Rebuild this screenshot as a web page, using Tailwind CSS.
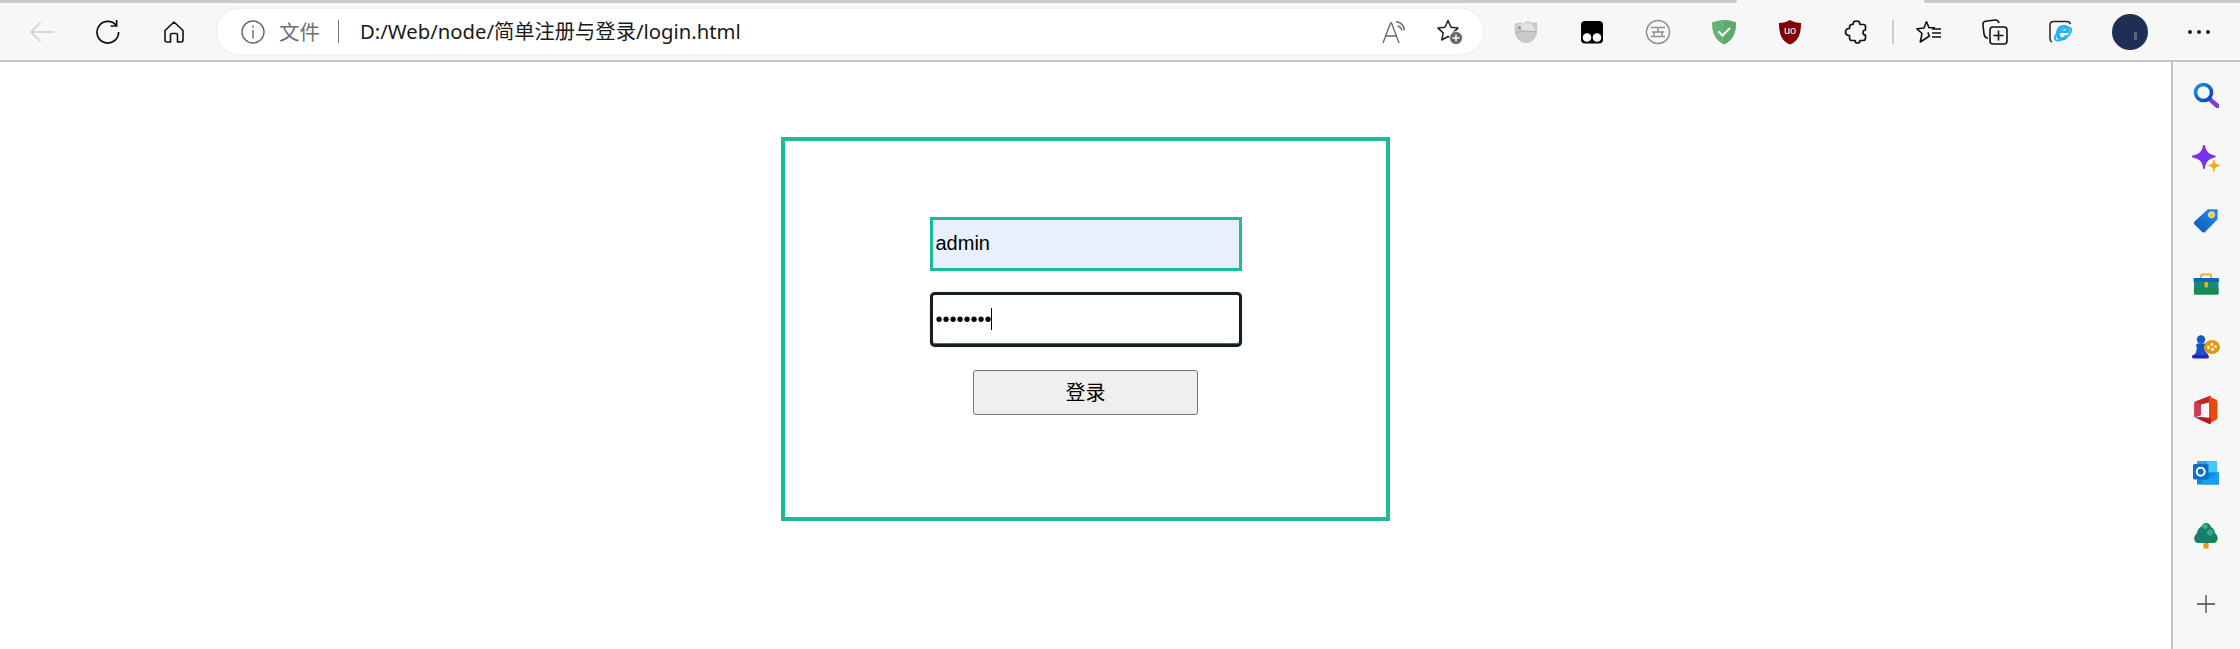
<!DOCTYPE html>
<html lang="zh">
<head>
<meta charset="utf-8">
<title>login</title>
<script src="https://cdn.jsdelivr.net/npm/@tailwindcss/browser@4"></script>
</head>
<body class="bg-white h-[649px] overflow-hidden font-['Liberation_Sans','Noto_Sans_CJK_SC',sans-serif]">
<header class="h-[62px] bg-[#f7f7f7] border-b-2 border-[#c4c4c4]">
  <div class="flex h-[3px]">
    <div class="w-[1737px] bg-[#c8c8c8] rounded-br-[4px]"></div>
    <div class="w-[187px]"></div>
    <div class="flex-1 bg-[#c8c8c8] rounded-bl-[4px]"></div>
  </div>
  <div class="flex items-center h-[57px] pl-[9px]">
    <div class="w-[66px] flex justify-center">
      <svg width="26" height="22" viewBox="0 0 26 22" fill="none" stroke="#cfcfcf" stroke-width="1.6"><path d="M25 11H2M11.5 1.5 2 11l9.5 9.5"/></svg>
    </div>
    <div class="w-[66px] flex justify-center">
      <svg width="26" height="26" viewBox="0 0 26 26" fill="none" stroke="#111" stroke-width="1.7"><path d="M21 6.2A10.8 10.8 0 1 0 23.6 13"/><path d="M21.6 1v6h-6"/></svg>
    </div>
    <div class="w-[66px] flex justify-center">
      <svg width="24" height="24" viewBox="0 0 24 24" fill="none" stroke="#111" stroke-width="1.6" stroke-linejoin="round"><path d="M12 2 3 10.5V20a2 2 0 0 0 2 2h3.5v-7a1.500 1.500 0 0 1 1.500-1.500h4a1.500 1.500 0 0 1 1.500 1.500v7H19a2 2 0 0 0 2-2v-9.500z"/></svg>
    </div>
    <div class="ml-[10px] w-[1266px] h-[45px] bg-white rounded-[22px] flex items-center pl-[24px] shadow-[0_0_3px_#e4e4e4]">
      <svg width="24" height="24" viewBox="0 0 24 24" fill="none" stroke="#666" stroke-width="1.4"><circle cx="12" cy="12" r="11"/><path d="M12 10v8.500M12 5.500v2.200"/></svg>
      <span class="ml-[14px] text-[20.5px] leading-none text-[#6f6f6f] font-['Noto_Sans_CJK_SC',sans-serif] w-[45px] whitespace-nowrap">文件</span>
      <span class="ml-[14px] w-[1px] h-[23px] bg-[#777]"></span>
      <span class="ml-[21px] text-[20.3px] text-[#1a1a1a] font-['Noto_Sans','Noto_Sans_CJK_SC',sans-serif] w-[1022px] whitespace-nowrap">D:/Web/node/简单注册与登录/login.html</span>
      <svg width="26" height="24" viewBox="0 0 26 24" fill="none" stroke="#666" stroke-width="1.3"><path d="M1 23 8.500 3h1L17 23M4 16h10.500"/><path d="M14 1.500c4.500.8 8 4 8.500 9M15.500 6c2.500.6 4 2.200 4.500 4.500"/></svg>
      <span class="ml-[28px] w-[28px] h-[26px]">
        <svg width="28" height="26" viewBox="0 0 28 26"><path d="M12 1.500l3 6.800 7 .8-5.200 4.800 1.400 7.100L12 17.500 5.800 21l1.400-7.100L2 9.100l7-.8z" fill="none" stroke="#222" stroke-width="1.500" stroke-linejoin="round"/><circle cx="20" cy="19" r="6.500" fill="#666" stroke="#fff" stroke-width="0.800"/><path d="M20 15.500v7M16.500 19h7" stroke="#fff" stroke-width="1.400"/></svg>
      </span>
    </div>
    <div class="ml-[10px] w-[66px] flex justify-center">
      <svg width="24" height="24" viewBox="0 0 24 24"><path d="M1 3c2 1 3 .5 5-1l3 2c3-3 7-3 9-1 2-.5 4-.5 5-1 .5 8 .5 12-2 16-2 3-5 5-9 5-4 0-7-2-9-5C0 14 .5 9 1 3z" fill="#c9c9c9"/><path d="M3 5.500 11 12 21 11c0-3-2-7-6-8-4 0-7 1-12 2.500z" fill="#e2e2e2"/><path d="M1 12.500 11 11l12 1" stroke="#aaa" fill="none"/><circle cx="5.500" cy="7.500" r="1.500" fill="#8f8f8f"/></svg>
    </div>
    <div class="w-[66px] flex justify-center">
      <svg width="24" height="24" viewBox="0 0 24 24"><rect x="1" y="1" width="22" height="22.500" rx="4" fill="#000"/><circle cx="7" cy="17.500" r="4.300" fill="#fff"/><circle cx="17" cy="17.500" r="4.300" fill="#fff"/></svg>
    </div>
    <div class="w-[66px] flex justify-center">
      <svg width="26" height="26" viewBox="0 0 26 26" fill="none" stroke="#8f8f8f" stroke-width="1.500"><circle cx="13" cy="13" r="11.500"/><path d="M6 8.500h14M6 17.500h14M7 13h12M13 8.500V13M9 13v4.500M17 13v4.500" stroke-width="1.400"/></svg>
    </div>
    <div class="w-[66px] flex justify-center">
      <svg width="24" height="26" viewBox="0 0 24 26"><path d="M12 1C8 1 4 2 0 3.500 0 12 2 21 12 25.500 22 21 24 12 24 3.500 20 2 16 1 12 1z" fill="#67b279"/><path d="M12 1v24.500C22 21 24 12 24 3.500 20 2 16 1 12 1z" fill="#5ea96f"/><path d="M6.500 12.500l4 4 7.500-7.500" fill="none" stroke="#fff" stroke-width="2"/></svg>
    </div>
    <div class="w-[66px] flex justify-center">
      <svg width="22" height="26" viewBox="0 0 22 26"><path d="M11 1C8 3 4 4 0 4c0 10 2 18 11 21.500C20 22 22 14 22 4c-4 0-8-1-11-3z" fill="#800000"/><text x="11" y="15" text-anchor="middle" font-family="Liberation Sans" font-size="11" fill="#fff">uo</text></svg>
    </div>
    <div class="w-[66px] flex justify-center">
      <svg width="24" height="24" viewBox="0 0 24 24" fill="none" stroke="#111" stroke-width="1.700" stroke-linejoin="round"><path d="M9 4.500C9 2.500 10.500 1 12.500 1S16 2.500 16 4.500h3.500c1.500 0 2 1 2 2V10c-1.500 0-2.500 1-2.500 2.500S20 15 21.500 15v3c0 1.500-1 2.500-2.500 2.500h-3c0 1.500-1 2.500-2.500 2.500S11 22 11 20.500H8c-1.500 0-2.500-1-2.500-2.500v-2.500C3.500 15.500 1.500 14.500 1.500 12S3.500 8.500 5.500 8.500V7C5.500 5.500 6.500 4.500 8 4.500z"/></svg>
    </div>
    <div class="ml-[3px] w-[2px] h-[24px] bg-[#cdcdcd]"></div>
    <div class="ml-[2px] w-[66px] flex justify-center">
      <svg width="26" height="24" viewBox="0 0 26 24" fill="none" stroke="#111" stroke-width="1.600" stroke-linejoin="round"><path d="M10.500 1.500l2.500 6.300 0 0H19M13 13l-1 0 1.500 3M10.500 1.500 8 8l-7 .8 5 4.700-1.700 8.500L10.500 18l3.500-2.500"/><path d="M16 9h9M16 13h9M16 17h9"/></svg>
    </div>
    <div class="w-[66px] flex justify-center">
      <svg width="26" height="26" viewBox="0 0 26 26" fill="none" stroke="#111" stroke-width="1.600"><path d="M6 19C3 19 2.500 17.500 2 15L1 6c-.3-2 .7-3.500 2.500-3.700L13 1c2-.2 3.500.8 4 3"/><rect x="8" y="8" width="17" height="17" rx="3"/><path d="M16.500 11.500v10M11.500 16.500h10"/></svg>
    </div>
    <div class="w-[66px] flex justify-center">
      <div class="relative w-[24px] h-[24px]">
        <svg width="24" height="24" viewBox="0 0 24 24"><path d="M3 22C1.500 21.500 1 20.500 1 19V5c0-2 1.500-3.500 3.500-3.500H18c2 0 3 1 3.500 2.500" fill="none" stroke="#222" stroke-width="1.500"/><ellipse cx="14" cy="14" rx="9.500" ry="4.500" transform="rotate(-35 14 14)" fill="none" stroke="#1eb4f0" stroke-width="1.800"/></svg>
        <span class="absolute left-[6px] top-[-2px] text-[27px] leading-[26px] font-bold italic text-[#1eb4f0]">e</span>
      </div>
    </div>
    <div class="ml-[3px] w-[66px] flex justify-center">
      <div class="relative w-[36px] h-[36px] rounded-full bg-[#1f2e55]">
        <span class="absolute left-[22px] top-[18px] w-[3px] h-[8px] bg-[#5b6478]"></span>
      </div>
    </div>
    <div class="ml-[3px] w-[66px] flex justify-center gap-[5px]">
      <span class="w-[4px] h-[4px] rounded-full bg-[#222]"></span>
      <span class="w-[4px] h-[4px] rounded-full bg-[#222]"></span>
      <span class="w-[4px] h-[4px] rounded-full bg-[#222]"></span>
    </div>
  </div>
</header>
<div class="flex h-[587px]">
  <main class="flex-1 pt-[75px]">
    <div class="mx-auto w-[609px] h-[384px] border-4 border-[#1abc9c] flex flex-col items-center pt-[76px]">
      <input type="text" value="admin" class="w-[312px] h-[54px] border-3 border-[#1abc9c] bg-[#e8f0fe] pl-[3px] pb-[2px] text-[20px] text-black outline-none">
      <div class="relative mt-[21px] w-[312px] h-[55px]">
        <input type="password" value="12345678" class="w-full h-full rounded-[5px] border-3 border-[#151f1d] bg-white pl-[3px] text-[20px] text-black outline-none shadow-[inset_0_-1px_0_#0f8a72,0_0_1px_#888]">
        <span class="absolute left-[61px] top-[16px] w-[1px] h-[22px] bg-black"></span>
      </div>
      <button class="mt-[23px] w-[225px] h-[45px] bg-[#efefef] border border-[#767676] rounded-[3px] text-[20px] text-black">登录</button>
    </div>
  </main>
  <aside class="w-[69px] bg-[#f7f7f7] border-l-2 border-[#c4c4c4] flex flex-col items-center pt-[1.500px] pr-[1px]">
    <div class="h-[63px] flex items-center">
      <svg width="26" height="26" viewBox="0 0 26 26"><defs><linearGradient id="a" x1="0" y1="0" x2="1" y2="1"><stop offset="0" stop-color="#1f8fe8"/><stop offset="1" stop-color="#0a3fb0"/></linearGradient></defs><path d="M16.500 17l8 7" stroke="#7f3fd9" stroke-width="4.500" stroke-linecap="round"/><circle cx="10.500" cy="10.500" r="8" fill="none" stroke="url(#a)" stroke-width="3.600"/></svg>
    </div>
    <div class="h-[63px] flex items-center">
      <svg width="28" height="27" viewBox="0 0 28 27"><path d="M12 0c1 7 4 10 11 11.500C16 13 13 16 12 23.500 11 16 8 13 0 11.500 8 10 11 7 12 0z" fill="#7b2ff2" stroke="#7b2ff2" stroke-width="1.500" stroke-linejoin="round"/><path d="M22 15c.5 3 1.500 5 5.500 5.500-4 .5-5 2.500-5.500 6-.5-3.500-1.500-5.500-5.500-6 4-.5 5-2.500 5.500-5.500z" fill="#f0ae12" stroke="#f0ae12"/></svg>
    </div>
    <div class="h-[63px] flex items-center">
      <svg width="26" height="26" viewBox="0 0 26 26"><defs><linearGradient id="b" x1="0" y1="1" x2="1" y2="0"><stop offset="0" stop-color="#0a55b8"/><stop offset="1" stop-color="#2a8fe8"/></linearGradient></defs><path d="M1.500 13.500 14 2c.6-.5 1-.7 2-.7h7.500c.8 0 1.200.4 1.200 1.200V10c0 1-.3 1.500-1 2.200L12 24c-.8.800-2 .8-2.800 0l-7.700-7.500c-.8-.8-.8-2.200 0-3z" fill="url(#b)"/><circle cx="18.500" cy="6.800" r="3" fill="#f5c518" stroke="#fff" stroke-width="0.800"/></svg>
    </div>
    <div class="h-[63px] flex items-center">
      <svg width="26" height="22" viewBox="0 0 26 22"><path d="M8 6V3c0-1 .6-1.500 1.500-1.500h7C17.400 1.500 18 2 18 3v3" fill="none" stroke="#eeb320" stroke-width="2"/><rect x="1" y="6" width="24.500" height="15.500" rx="1.500" fill="#1a8a78"/><rect x="1" y="15" width="24.500" height="6.500" fill="#178a4f"/><rect x="0.500" y="5" width="25.500" height="4" rx="1" fill="#1166c4"/><rect x="11.500" y="9" width="3.500" height="5.500" rx="1" fill="#f0ae12"/></svg>
    </div>
    <div class="h-[63px] flex items-center">
      <svg width="28" height="24" viewBox="0 0 28 24"><circle cx="9" cy="4.500" r="4.200" fill="#1559bf"/><path d="M5 8.500h8l.5 2-1 1c0 4 1 5.500 3.500 7.500v3H1c-.6 0-1-.4-1-1 1-1 3-1 4-4 .5-1.500.8-3 .8-5l-1-1z" fill="#1456c4"/><rect x="0" y="20" width="17" height="3.500" rx="1.700" fill="#2a1fd0"/><ellipse cx="20" cy="12" rx="8" ry="7" fill="#e09a12"/><circle cx="16.500" cy="12.500" r="1.400" fill="#fff"/><circle cx="20" cy="9.500" r="1.400" fill="#fff"/><circle cx="20.500" cy="14.500" r="1.400" fill="#fff"/><circle cx="23.500" cy="11.500" r="1.200" fill="#fff"/></svg>
    </div>
    <div class="h-[63px] flex items-center">
      <svg width="24" height="30" viewBox="0 0 24 30"><path d="M1 6.500 15.500 1c.6 0 1 0 1.500.3V7L7 9.500V20L1 22.500c-.5-.5-.8-1-.8-2V8z" fill="#c2261c"/><path d="M15 1.500 21 4c1.600 .6 2.500 1.500 2.500 3.500v14.500c0 2-.8 3-2.500 3.500L15 29V1.500z" fill="#e04d0c"/><path d="M1 22.500 15 29l2-.6V23L7 22z" fill="#b31d1d"/><path d="M1 8.500c0-1 .2-1.500 .8-2L7 9.500V20l-6 2.500z" fill="#d9488f" opacity=".55"/></svg>
    </div>
    <div class="h-[63px] flex items-center">
      <svg width="26" height="26" viewBox="0 0 26 26"><rect x="4" y="1" width="20" height="23" rx="1" fill="#1fa5ec"/><rect x="14" y="1" width="10" height="12" fill="#3fcaf5"/><path d="M4 12 26 12.500V24.500H4z" fill="#0f86d8"/><path d="M26 12 14 19l-5-3v8.500h17z" fill="#14a0ea"/><rect x="0" y="4" width="15.500" height="15.500" rx="1.500" fill="#0a6fc8"/><circle cx="7.700" cy="11.700" r="4" fill="none" stroke="#fff" stroke-width="2"/></svg>
    </div>
    <div class="h-[63px] flex items-center">
      <svg width="24" height="26" viewBox="0 0 24 26"><rect x="9.500" y="18" width="5" height="7.500" fill="#e89a10"/><path d="M12 0c2.500 0 4 1.500 5 4 2.500 1 3.500 3 4 6 2 2 3 4 2.500 6-.5 2.500-2.500 4-5 4H5c-3 0-5-2-4.800-4.500 0-2 1-3.500 2.800-5.500C3.500 6.500 5.500 4 7.500 3.500 8.500 1 10 0 12 0z" fill="#14806e"/><circle cx="16" cy="9.500" r="3" fill="#3fa38a"/><circle cx="11" cy="3.500" r="2.500" fill="#4aa897"/><path d="M20 15c1.500 0 3 .5 3.500 1-.5 2.500-2.500 4-5 4H13c3-.5 5-3 7-5z" fill="#128a3c"/></svg>
    </div>
    <div class="h-[63px] mt-[5px] flex items-center">
      <svg width="18" height="18" viewBox="0 0 18 18" stroke="#444" stroke-width="1.300"><path d="M9 0v18M0 9h18"/></svg>
    </div>
  </aside>
</div>
</body>
</html>
